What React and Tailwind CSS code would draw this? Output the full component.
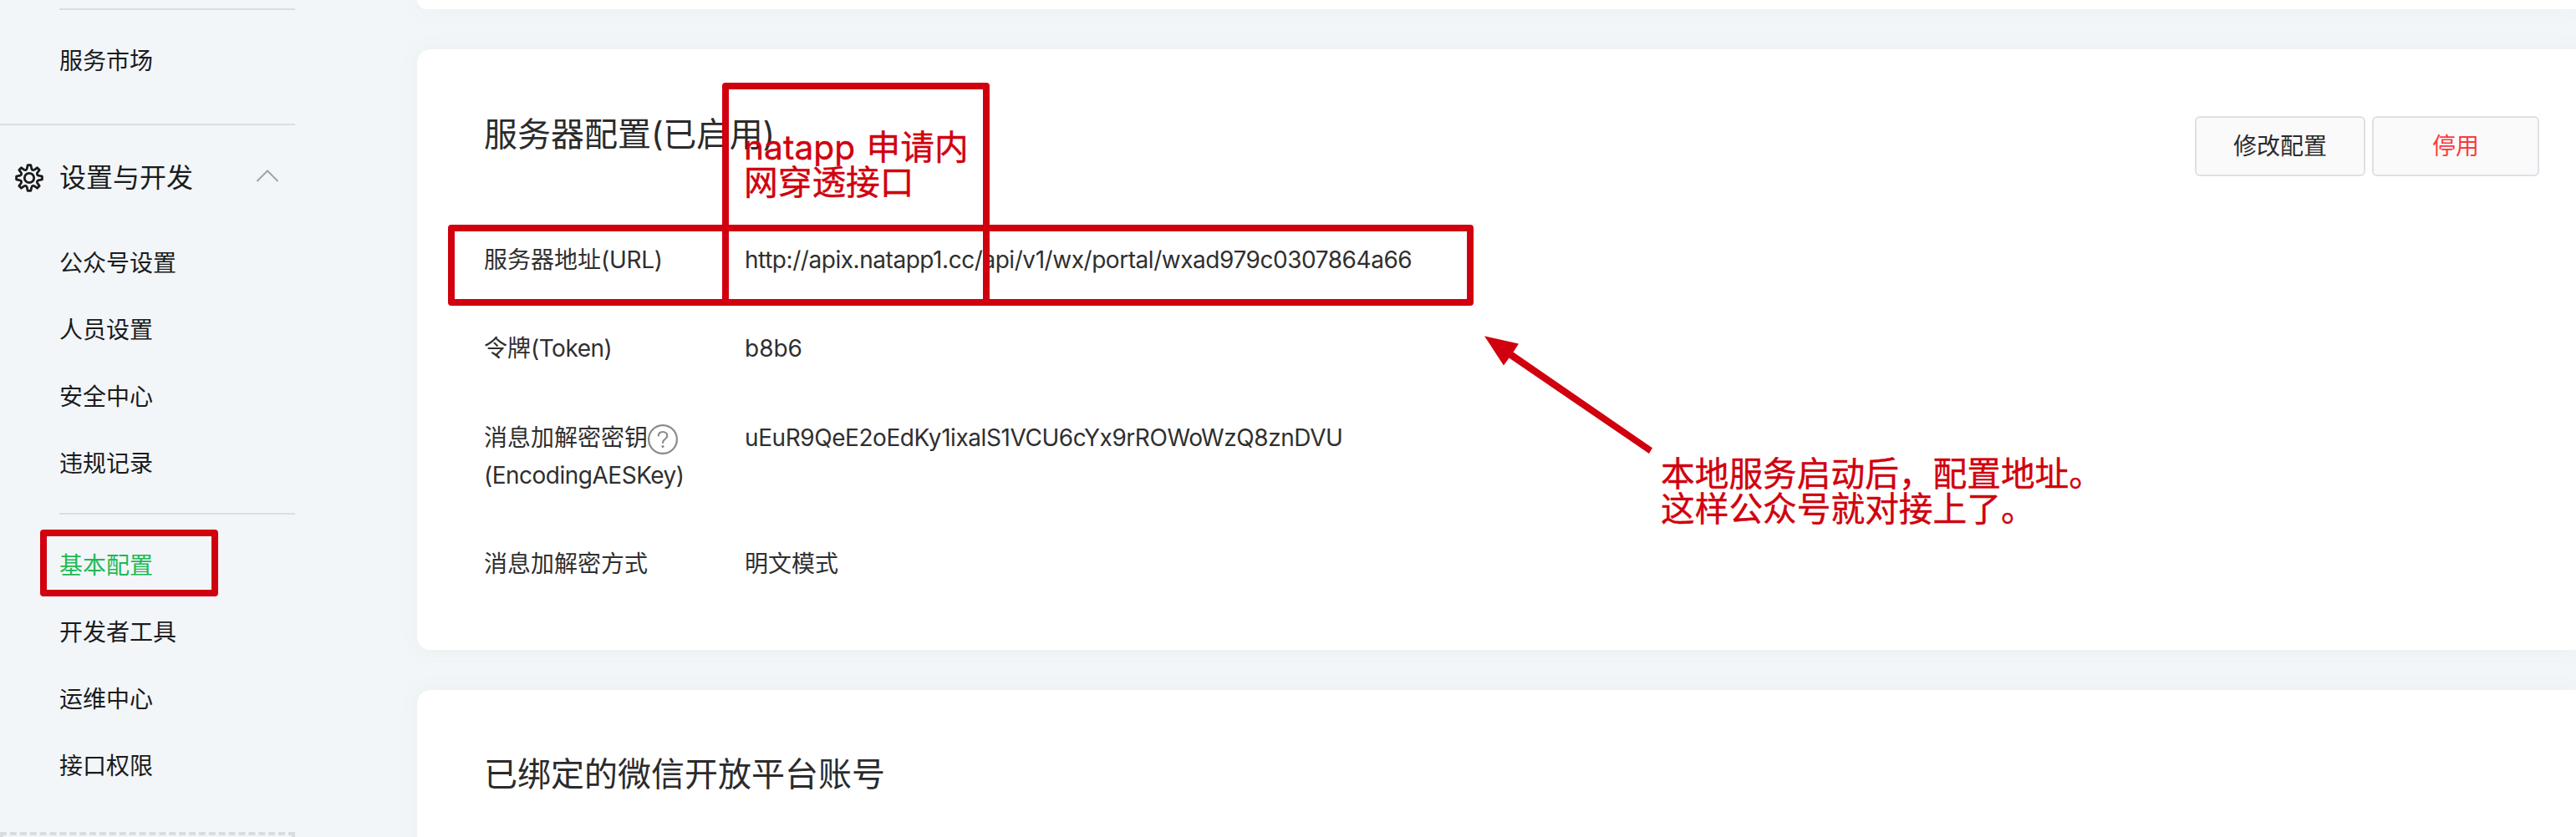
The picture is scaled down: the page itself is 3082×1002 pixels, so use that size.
function NavItem({ children, active }) {
  return (
    <a className={"flex h-20 items-center pl-[71px] text-[28px] leading-none " + (active ? "text-[#1db954]" : "text-[#1a1b1c]")}>
      {children}
    </a>
  );
}

function Sidebar() {
  return (
    <aside className="flex h-full w-[353px] shrink-0 flex-col overflow-hidden">
      <div className="mt-[10px] ml-[71px] h-0.5 shrink-0 bg-[#dadee1]" />
      <div className="mt-[21px] mb-[35px]">
        <NavItem>服务市场</NavItem>
      </div>
      <div className="h-0.5 shrink-0 bg-[#dadee1]" />
      <div className="mt-[22px] flex h-20 shrink-0 items-center pt-0.5 text-[#1a1b1c]">
        <svg className="ml-[17px] h-9 w-9" viewBox="0 0 36 36" fill="none" stroke="currentColor" strokeWidth="2.8" strokeLinejoin="round">
          <path d="M16.200 2.600h3.600l1 4.400q.3 1 1.300 1.500t2.200-.3l3.200-2.400 2.700 2.700-2.400 3.200q-.8 1.100-.3 2.200t1.500 1.300l4.400 1v3.600l-4.400 1q-1 .3-1.500 1.300t.3 2.200l2.400 3.200-2.700 2.700-3.200-2.400q-1.100-.8-2.200-.3t-1.300 1.500l-1 4.400h-3.600l-1-4.400q-.3-1-1.300-1.500t-2.200.3l-3.200 2.400-2.700-2.700 2.400-3.200q.8-1.100.3-2.200t-1.500-1.300l-4.400-1v-3.600l4.400-1q1-.3 1.500-1.300t-.3-2.200l-2.400-3.200 2.700-2.700 3.200 2.400q1.100.8 2.200.3t1.300-1.500z" />
          <circle cx="18" cy="18" r="5.700" />
        </svg>
        <span className="ml-[18px] text-[32px] leading-none">设置与开发</span>
        <svg className="-mt-1.5 ml-auto mr-[19px] h-4 w-7" viewBox="0 0 28 16" fill="none" stroke="#a0a3a6" strokeWidth="2">
          <path d="M1.500 15 14 2.500 26.500 15" />
        </svg>
      </div>
      <nav className="mt-[23px] shrink-0">
        <NavItem>公众号设置</NavItem>
        <NavItem>人员设置</NavItem>
        <NavItem>安全中心</NavItem>
        <NavItem>违规记录</NavItem>
      </nav>
      <div className="mt-[19px] ml-[71px] h-0.5 shrink-0 bg-[#dadee1]" />
      <nav className="mt-[21px] shrink-0">
        <NavItem active>基本配置</NavItem>
        <NavItem>开发者工具</NavItem>
        <NavItem>运维中心</NavItem>
        <NavItem>接口权限</NavItem>
      </nav>
      <div className="mt-[39px] h-20 shrink-0 border-4 border-dashed border-[#dadcdf]" />
    </aside>
  );
}

const card = "shrink-0 bg-white shadow-[0_0_20px_rgba(233,238,235,0.9)]";

function Row({ label, value, className }) {
  return (
    <div className={"flex text-[28px] leading-[45px] text-[#2f2f2f] " + className}>
      <div className="w-[312px] shrink-0">{label}</div>
      <div>{value}</div>
    </div>
  );
}

function HelpIcon() {
  return (
    <svg className="mt-[3px] h-9 w-9" viewBox="0 0 36 36" fill="none" stroke="#8b8b8b" strokeWidth="2.200">
      <circle cx="18" cy="18" r="16.900" />
      <path d="M12.800 14.200c0-3.300 2.200-5.200 5.300-5.200 3 0 5.200 1.900 5.200 4.600 0 2-1 3.200-2.700 4.300-1.800 1.100-2.500 2-2.500 3.600v1.200" />
      <circle cx="18" cy="26.500" r="1.600" fill="#8b8b8b" stroke="none" />
    </svg>
  );
}

function Main() {
  return (
    <main className="ml-[146px] flex h-full flex-1 flex-col">
      <section className={card + " h-[11px] rounded-bl-2xl"} />
      <section className={card + " mt-12 flex h-[719px] rounded-l-2xl pl-20"}>
        <div className="flex-1">
          <h2 className="mt-[76px] text-[40px] leading-[52px] text-[#2b2b2b]">服务器配置<span className="tracking-[-0.3px]">(已启用)</span></h2>
          <Row className="mt-[102px]" label={<>服务器地址<span className="tracking-[-0.3px]">(URL)</span></>} value={<span className="tracking-[-0.45px]">http://apix.natapp1.cc/api/v1/wx/portal/wxad979c0307864a66</span>} />
          <Row className="mt-[61px]" label={<>令牌<span className="tracking-[-0.5px]">(Token)</span></>} value={<span>b8b6</span>} />
          <Row
            className="mt-[62px]"
            label={
              <>
                <div className="flex h-[45px] items-center"><span>消息加解密密钥</span><HelpIcon /></div>
                <span className="tracking-[-0.5px]">(EncodingAESKey)</span>
              </>
            }
            value={<span className="tracking-[-0.43px]">uEuR9QeE2oEdKy1ixalS1VCU6cYx9rROWoWzQ8znDVU</span>}
          />
          <Row className="mt-[61px]" label="消息加解密方式" value="明文模式" />
        </div>
        <div className="mt-20 mr-11 flex gap-2 text-[28px]">
          <button className="h-[72px] w-[204px] rounded-md border-2 border-[#dde1e6] bg-[#fafafa] text-[#2b2b2b]">修改配置</button>
          <button className="h-[72px] w-[200px] rounded-md border-2 border-[#dde1e6] bg-[#fafafa] text-[#fa3a3f]">停用</button>
        </div>
      </section>
      <section className={card + " mt-12 h-[240px] rounded-tl-2xl pl-20"}>
        <h2 className="mt-[75px] text-[40px] leading-[52px] text-[#2b2b2b]">已绑定的微信开放平台账号</h2>
      </section>
    </main>
  );
}

function Annotations() {
  return (
    <div className="pointer-events-none absolute inset-0 text-[40.7px] leading-[42px] text-[#d0000e] [-webkit-text-stroke:0.4px_#d0000e]">
      <div className="absolute left-[48px] top-[634px] h-[80px] w-[213px] rounded-[4px] border-8 border-[#d0000e]" />
      <div className="absolute left-[536px] top-[269px] h-[97px] w-[1227px] rounded-[4px] border-8 border-[#d0000e]" />
      <div className="absolute left-[864px] top-[99px] h-[267px] w-[320px] rounded-[4px] border-8 border-[#d0000e]" />
      <p className="absolute left-[890px] top-[156px] whitespace-nowrap"><span className="mr-[2px]">natapp</span> 申请内<br />网穿透接口</p>
      <p className="absolute left-[1987px] top-[547px] whitespace-nowrap">本地服务启动后，配置地址。<br />这样公众号就对接上了。</p>
      <svg className="absolute left-[1770px] top-[396px] h-[152px] w-[212px]" viewBox="1770 396 212 152" fill="#d0000e">
        <path d="M1776 402.300 1817 411.500 1810.500 421.500 1977 536.300 1973 543 1805.500 428.500 1799 437.500z" />
      </svg>
    </div>
  );
}

export default function App() {
  return (
    <div className="relative flex h-[1002px] w-[3082px] overflow-hidden bg-[#f2f6f9]" style={{ fontFamily: 'Inter, "Noto Sans CJK SC", sans-serif' }}>
      <Sidebar />
      <Main />
      <Annotations />
    </div>
  );
}
